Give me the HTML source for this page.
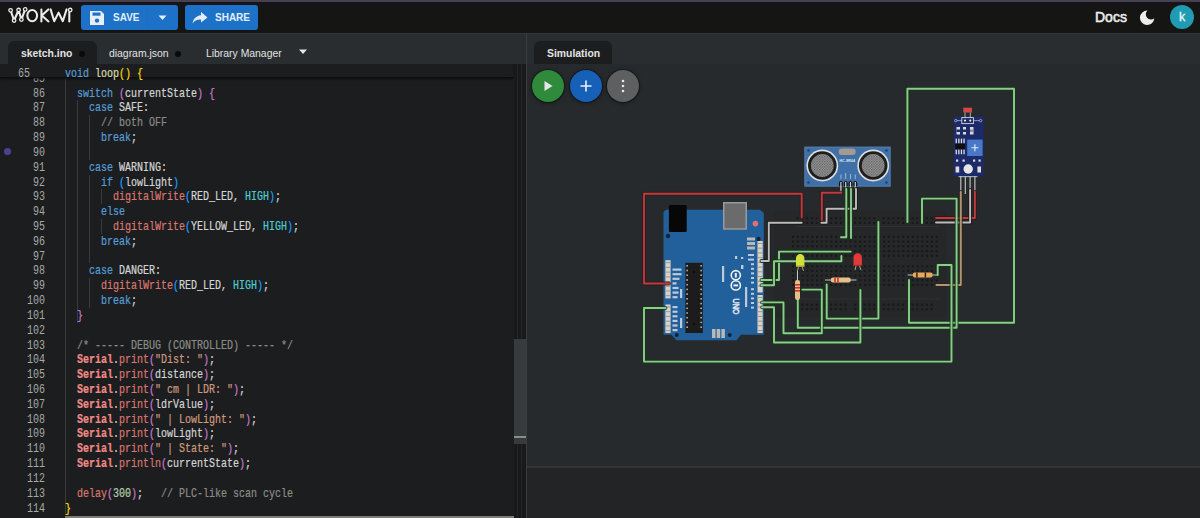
<!DOCTYPE html>
<html><head><meta charset="utf-8">
<style>
*{margin:0;padding:0;box-sizing:border-box}
html,body{width:1200px;height:518px;overflow:hidden;background:#161616;font-family:"Liberation Sans",sans-serif;position:relative}
.abs{position:absolute}
.btn{position:absolute;top:5px;height:25px;background:#1d72c8;border-radius:3px;color:#e3eefa;font-weight:bold;font-size:11px}
.tabtxt{position:absolute;font-size:10.4px;color:#e2e2e2;white-space:nowrap;line-height:12px}
.ln{position:absolute;left:0;width:45px;text-align:right;font-family:"Liberation Mono",monospace;font-size:11px;line-height:14.82px;color:#a9a9a4;transform:scale(0.909,1.08);transform-origin:right top}
.cl{position:absolute;left:65px;white-space:pre;font-family:"Liberation Mono",monospace;font-size:11px;color:#d4d4d4;transform:scale(0.909,1.08);transform-origin:left top;line-height:14.82px;height:14.82px;-webkit-text-stroke:0.2px currentColor}
.k{color:#569cd6}.f{color:#dcdcaa}.fn{color:#da766f}.s{color:#cf9a7e}.c{color:#8b8b85}.p1{color:#ffd700}.p2{color:#c878d0}.p3{color:#179fff}.h{color:#4ec9d0}.n{color:#b5cea8}.ser{color:#f08a86;font-weight:bold}
.fab{position:absolute;top:70px;width:32px;height:32px;border-radius:50%;box-shadow:0 0 0 1px rgba(0,0,0,.3),0 1px 4px rgba(0,0,0,.5)}
</style></head><body>
<div class="abs" style="left:0;top:0;width:1200px;height:2px;background:#46404f"></div>
<div class="abs" style="left:0;top:2px;width:1200px;height:31px;background:#151614"></div><div class="abs" style="left:0;top:2px;width:1200px;height:3px;background:#16131a"></div>
<!-- logo -->
<svg class="abs" style="left:0;top:0" width="80" height="33" viewBox="0 0 80 33">
 <g fill="none" stroke="#ececec" stroke-width="2.05" stroke-linecap="round" stroke-linejoin="round">
  <polyline points="10.6,10.3 14.1,20.5 18.6,10.0 21.4,19.6 25.2,9.4"/>
  <ellipse cx="32.2" cy="15.6" rx="4.9" ry="5.6"/>
  <path d="M41.4,9.4 V21.4 M48.3,9.4 L41.8,15.6 L48.5,21.4"/>
  <polyline points="50.6,9.4 54.2,21.2 58.6,12.6 62.8,21.2 66.6,9.4"/>
  <path d="M69.3,12.8 V21.4"/>
 </g>
 <g fill="#161616" stroke="#ececec" stroke-width="1.3">
  <circle cx="10.6" cy="10.3" r="1.75"/><circle cx="18.6" cy="10.0" r="1.75"/><circle cx="25.2" cy="9.4" r="1.75"/>
  <circle cx="14.1" cy="20.5" r="1.75"/><circle cx="21.4" cy="19.6" r="1.75"/><circle cx="70.2" cy="10.0" r="1.75"/>
 </g>
</svg>
<!-- save button -->
<div class="btn" style="left:81px;width:97px"></div>
<svg class="abs" style="left:88px;top:10px" width="18" height="16" viewBox="0 0 18 16">
 <path d="M2,1 H13 L16,4 V15 H2 Z" fill="#e8eef5"/>
 <rect x="4.5" y="2.5" width="8" height="3.2" fill="#1d72c8"/>
 <circle cx="9" cy="10.6" r="2.2" fill="#1d72c8"/>
</svg>
<div class="abs" style="left:113px;top:11.5px;font-size:10px;font-weight:bold;color:#e3eefa;line-height:12px;transform:scaleY(1.08)">SAVE</div>
<div class="abs" style="left:147px;top:7px;width:1px;height:21px;background:#1c6ec2"></div>
<svg class="abs" style="left:158px;top:15px" width="9" height="6" viewBox="0 0 9 6"><path d="M0.5,0.5 H8.5 L4.5,5 Z" fill="#e3eefa"/></svg>
<!-- share -->
<div class="btn" style="left:185px;width:73px"></div>
<svg class="abs" style="left:191px;top:10px" width="18" height="16" viewBox="0 0 18 16">
 <path d="M10,2 L16.5,7.6 L10,12.6 V9.6 C6,9.4 3.5,10.6 1.5,13.4 C2.3,9 4.8,5.8 10,5.2 Z" fill="#e3eefa"/>
</svg>
<div class="abs" style="left:215px;top:11.5px;font-size:10px;font-weight:bold;color:#e3eefa;line-height:12px;transform:scaleY(1.08)">SHARE</div>
<!-- right header -->
<div class="abs" style="left:1095px;top:9px;font-size:14px;color:#ececec;line-height:16px;-webkit-text-stroke:0.55px #ececec">Docs</div>
<svg class="abs" style="left:1138px;top:9px" width="18" height="18" viewBox="0 0 18 18">
 <path d="M9.5,1.6 A7.2,7.2 0 1 0 16.3,9.2 A4.6,4.6 0 0 1 9.5,1.6 Z" fill="#ededed"/>
</svg>
<div class="abs" style="left:1170px;top:4.5px;width:24px;height:24px;border-radius:50%;background:#1f9cb3"></div>
<div class="abs" style="left:1170px;top:10px;width:24px;text-align:center;font-size:12.5px;color:#eaf6f8;line-height:14px;-webkit-text-stroke:0.3px #eaf6f8">k</div>

<!-- tab bar -->
<div class="abs" style="left:0;top:33px;width:526px;height:31px;background:#2a2d30;border-top:1px solid #32353a"></div>
<div class="abs" style="left:8px;top:41px;width:89px;height:23px;border-radius:6px 6px 0 0;background:#1c1d1f"></div>
<div class="tabtxt" style="left:21px;top:47.7px;font-weight:bold">sketch.ino</div>
<div class="abs" style="left:78.5px;top:50.5px;width:6px;height:6px;border-radius:50%;background:#0a0a0a"></div>
<div class="tabtxt" style="left:109px;top:47.7px">diagram.json</div>
<div class="abs" style="left:175px;top:50.5px;width:6px;height:6px;border-radius:50%;background:#0a0a0a"></div>
<div class="tabtxt" style="left:206px;top:47.7px">Library Manager</div>
<svg class="abs" style="left:299px;top:49px" width="8" height="5" viewBox="0 0 8 5"><path d="M0,0.5 H8 L4,5 Z" fill="#e6e6e6"/></svg>

<!-- code -->
<div class="abs" style="left:0;top:64px;width:526px;height:454px;background:#1c1d1f;overflow:hidden">
<div class="abs" style="left:65px;top:6.76px;width:1px;height:444.60px;background:#3a3a3a"></div><div class="abs" style="left:77px;top:36.40px;width:1px;height:222.30px;background:#3a3a3a"></div><div class="abs" style="left:89px;top:51.22px;width:1px;height:44.46px;background:#3a3a3a"></div><div class="abs" style="left:89px;top:110.50px;width:1px;height:88.92px;background:#3a3a3a"></div><div class="abs" style="left:89px;top:214.24px;width:1px;height:29.64px;background:#3a3a3a"></div><div class="abs" style="left:101px;top:125.32px;width:1px;height:14.82px;background:#3a3a3a"></div><div class="abs" style="left:101px;top:154.96px;width:1px;height:14.82px;background:#3a3a3a"></div><div class="ln" style="top:6.76px">85</div><div class="cl" style="top:6.76px"></div><div class="ln" style="top:21.58px">86</div><div class="cl" style="top:21.58px">  <span class="k">switch</span> <span class="p2">(</span>currentState<span class="p2">)</span> <span class="p2">{</span></div><div class="ln" style="top:36.40px">87</div><div class="cl" style="top:36.40px">    <span class="k">case</span> SAFE:</div><div class="ln" style="top:51.22px">88</div><div class="cl" style="top:51.22px">      <span class="c">// both OFF</span></div><div class="ln" style="top:66.04px">89</div><div class="cl" style="top:66.04px">      <span class="k">break</span>;</div><div class="ln" style="top:80.86px">90</div><div class="cl" style="top:80.86px"></div><div class="ln" style="top:95.68px">91</div><div class="cl" style="top:95.68px">    <span class="k">case</span> WARNING:</div><div class="ln" style="top:110.50px">92</div><div class="cl" style="top:110.50px">      <span class="k">if</span> <span class="p3">(</span>lowLight<span class="p3">)</span></div><div class="ln" style="top:125.32px">93</div><div class="cl" style="top:125.32px">        <span class="fn">digitalWrite</span><span class="p3">(</span>RED_LED, <span class="h">HIGH</span><span class="p3">)</span>;</div><div class="ln" style="top:140.14px">94</div><div class="cl" style="top:140.14px">      <span class="k">else</span></div><div class="ln" style="top:154.96px">95</div><div class="cl" style="top:154.96px">        <span class="fn">digitalWrite</span><span class="p3">(</span>YELLOW_LED, <span class="h">HIGH</span><span class="p3">)</span>;</div><div class="ln" style="top:169.78px">96</div><div class="cl" style="top:169.78px">      <span class="k">break</span>;</div><div class="ln" style="top:184.60px">97</div><div class="cl" style="top:184.60px"></div><div class="ln" style="top:199.42px">98</div><div class="cl" style="top:199.42px">    <span class="k">case</span> DANGER:</div><div class="ln" style="top:214.24px">99</div><div class="cl" style="top:214.24px">      <span class="fn">digitalWrite</span><span class="p3">(</span>RED_LED, <span class="h">HIGH</span><span class="p3">)</span>;</div><div class="ln" style="top:229.06px">100</div><div class="cl" style="top:229.06px">      <span class="k">break</span>;</div><div class="ln" style="top:243.88px">101</div><div class="cl" style="top:243.88px">  <span class="p2">}</span></div><div class="ln" style="top:258.70px">102</div><div class="cl" style="top:258.70px"></div><div class="ln" style="top:273.52px">103</div><div class="cl" style="top:273.52px">  <span class="c">/* ----- DEBUG (CONTROLLED) ----- */</span></div><div class="ln" style="top:288.34px">104</div><div class="cl" style="top:288.34px">  <span class="ser">Serial</span>.<span class="fn">print</span><span class="p2">(</span><span class="s">&quot;Dist: &quot;</span><span class="p2">)</span>;</div><div class="ln" style="top:303.16px">105</div><div class="cl" style="top:303.16px">  <span class="ser">Serial</span>.<span class="fn">print</span><span class="p2">(</span>distance<span class="p2">)</span>;</div><div class="ln" style="top:317.98px">106</div><div class="cl" style="top:317.98px">  <span class="ser">Serial</span>.<span class="fn">print</span><span class="p2">(</span><span class="s">&quot; cm | LDR: &quot;</span><span class="p2">)</span>;</div><div class="ln" style="top:332.80px">107</div><div class="cl" style="top:332.80px">  <span class="ser">Serial</span>.<span class="fn">print</span><span class="p2">(</span>ldrValue<span class="p2">)</span>;</div><div class="ln" style="top:347.62px">108</div><div class="cl" style="top:347.62px">  <span class="ser">Serial</span>.<span class="fn">print</span><span class="p2">(</span><span class="s">&quot; | LowLight: &quot;</span><span class="p2">)</span>;</div><div class="ln" style="top:362.44px">109</div><div class="cl" style="top:362.44px">  <span class="ser">Serial</span>.<span class="fn">print</span><span class="p2">(</span>lowLight<span class="p2">)</span>;</div><div class="ln" style="top:377.26px">110</div><div class="cl" style="top:377.26px">  <span class="ser">Serial</span>.<span class="fn">print</span><span class="p2">(</span><span class="s">&quot; | State: &quot;</span><span class="p2">)</span>;</div><div class="ln" style="top:392.08px">111</div><div class="cl" style="top:392.08px">  <span class="ser">Serial</span>.<span class="fn">println</span><span class="p2">(</span>currentState<span class="p2">)</span>;</div><div class="ln" style="top:406.90px">112</div><div class="cl" style="top:406.90px"></div><div class="ln" style="top:421.72px">113</div><div class="cl" style="top:421.72px">  <span class="fn">delay</span><span class="p2">(</span><span class="n">300</span><span class="p2">)</span>;   <span class="c">// PLC-like scan cycle</span></div><div class="ln" style="top:436.54px">114</div><div class="cl" style="top:436.54px"><span class="p1">}</span></div><div class="abs" style="left:0;top:0;width:513px;height:14px;background:#1c1d1f;border-bottom:1px solid #0e0e0f;box-shadow:0 1px 2px rgba(0,0,0,.6)"></div><div class="ln" style="top:1.98px;width:30px">65</div><div class="cl" style="top:1.98px"><span class="k">void</span> <span class="f">loop</span><span class="p1">()</span> <span class="p1">{</span></div>
 <div class="abs" style="left:4.3px;top:83.5px;width:7px;height:7px;border-radius:50%;background:#4b418e;box-shadow:0 0 2px #2a2450"></div>
 <div class="abs" style="left:65px;top:451.5px;width:461px;height:2px;background:#7d7d76"></div>
 <!-- scrollbar -->
 <div class="abs" style="left:514px;top:0;width:12px;height:454px;background:#19191b"></div>
 <div class="abs" style="left:517px;top:0;width:1px;height:454px;background:#242527"></div>
 <div class="abs" style="left:521px;top:0;width:1px;height:454px;background:#242527"></div>
 <div class="abs" style="left:514px;top:275px;width:12px;height:105px;background:#383b3e"></div>
 <div class="abs" style="left:514px;top:372px;width:12px;height:2px;background:#8a8c8c"></div>
</div>
<div class="abs" style="left:526px;top:33px;width:1px;height:485px;background:#3a3c3e"></div>

<!-- simulation -->
<div class="abs" style="left:527px;top:33px;width:673px;height:31px;background:#2a2d30;border-top:1px solid #32353a"></div>
<div class="abs" style="left:534px;top:41px;width:78px;height:23px;border-radius:6px 6px 0 0;background:#1c1d1f"></div>
<div class="tabtxt" style="left:547px;top:47.7px;font-weight:bold">Simulation</div>
<div class="abs" style="left:527px;top:64px;width:673px;height:403px;background:#272a2c"></div>
<div class="abs" style="left:527px;top:466px;width:673px;height:2px;background:#313436"></div>
<div class="abs" style="left:527px;top:468px;width:673px;height:50px;background:#222425"></div>
<svg class="abs" style="left:0;top:0;pointer-events:none" width="1200" height="518" viewBox="0 0 1200 518"><defs><pattern id="mesh" width="2.6" height="2.6" patternUnits="userSpaceOnUse"><rect width="2.6" height="2.6" fill="#9c9c9c"/><rect x="0" y="0" width="1.3" height="1.3" fill="#5c5c5c"/><rect x="1.3" y="1.3" width="1.3" height="1.3" fill="#6a6a6a"/></pattern></defs><rect x="774" y="211" width="173" height="107" rx="2" fill="#252729"/><g fill="#18191a"><rect x="796.5" y="217.2" width="2.1" height="2.1"/><rect x="801.3" y="217.2" width="2.1" height="2.1"/><rect x="806.1" y="217.2" width="2.1" height="2.1"/><rect x="810.9" y="217.2" width="2.1" height="2.1"/><rect x="815.7" y="217.2" width="2.1" height="2.1"/><rect x="825.2" y="217.2" width="2.1" height="2.1"/><rect x="830.0" y="217.2" width="2.1" height="2.1"/><rect x="834.8" y="217.2" width="2.1" height="2.1"/><rect x="839.6" y="217.2" width="2.1" height="2.1"/><rect x="844.4" y="217.2" width="2.1" height="2.1"/><rect x="854.0" y="217.2" width="2.1" height="2.1"/><rect x="858.8" y="217.2" width="2.1" height="2.1"/><rect x="863.6" y="217.2" width="2.1" height="2.1"/><rect x="868.4" y="217.2" width="2.1" height="2.1"/><rect x="873.1" y="217.2" width="2.1" height="2.1"/><rect x="882.7" y="217.2" width="2.1" height="2.1"/><rect x="887.5" y="217.2" width="2.1" height="2.1"/><rect x="892.3" y="217.2" width="2.1" height="2.1"/><rect x="897.1" y="217.2" width="2.1" height="2.1"/><rect x="901.9" y="217.2" width="2.1" height="2.1"/><rect x="911.5" y="217.2" width="2.1" height="2.1"/><rect x="916.2" y="217.2" width="2.1" height="2.1"/><rect x="921.0" y="217.2" width="2.1" height="2.1"/><rect x="925.8" y="217.2" width="2.1" height="2.1"/><rect x="930.6" y="217.2" width="2.1" height="2.1"/><rect x="796.5" y="221.8" width="2.1" height="2.1"/><rect x="801.3" y="221.8" width="2.1" height="2.1"/><rect x="806.1" y="221.8" width="2.1" height="2.1"/><rect x="810.9" y="221.8" width="2.1" height="2.1"/><rect x="815.7" y="221.8" width="2.1" height="2.1"/><rect x="825.2" y="221.8" width="2.1" height="2.1"/><rect x="830.0" y="221.8" width="2.1" height="2.1"/><rect x="834.8" y="221.8" width="2.1" height="2.1"/><rect x="839.6" y="221.8" width="2.1" height="2.1"/><rect x="844.4" y="221.8" width="2.1" height="2.1"/><rect x="854.0" y="221.8" width="2.1" height="2.1"/><rect x="858.8" y="221.8" width="2.1" height="2.1"/><rect x="863.6" y="221.8" width="2.1" height="2.1"/><rect x="868.4" y="221.8" width="2.1" height="2.1"/><rect x="873.1" y="221.8" width="2.1" height="2.1"/><rect x="882.7" y="221.8" width="2.1" height="2.1"/><rect x="887.5" y="221.8" width="2.1" height="2.1"/><rect x="892.3" y="221.8" width="2.1" height="2.1"/><rect x="897.1" y="221.8" width="2.1" height="2.1"/><rect x="901.9" y="221.8" width="2.1" height="2.1"/><rect x="911.5" y="221.8" width="2.1" height="2.1"/><rect x="916.2" y="221.8" width="2.1" height="2.1"/><rect x="921.0" y="221.8" width="2.1" height="2.1"/><rect x="925.8" y="221.8" width="2.1" height="2.1"/><rect x="930.6" y="221.8" width="2.1" height="2.1"/><rect x="792.0" y="235.8" width="2.1" height="2.1"/><rect x="792.0" y="265.2" width="2.1" height="2.1"/><rect x="796.8" y="235.8" width="2.1" height="2.1"/><rect x="796.8" y="265.2" width="2.1" height="2.1"/><rect x="801.6" y="235.8" width="2.1" height="2.1"/><rect x="801.6" y="265.2" width="2.1" height="2.1"/><rect x="806.4" y="235.8" width="2.1" height="2.1"/><rect x="806.4" y="265.2" width="2.1" height="2.1"/><rect x="811.2" y="235.8" width="2.1" height="2.1"/><rect x="811.2" y="265.2" width="2.1" height="2.1"/><rect x="816.0" y="235.8" width="2.1" height="2.1"/><rect x="816.0" y="265.2" width="2.1" height="2.1"/><rect x="820.7" y="235.8" width="2.1" height="2.1"/><rect x="820.7" y="265.2" width="2.1" height="2.1"/><rect x="825.5" y="235.8" width="2.1" height="2.1"/><rect x="825.5" y="265.2" width="2.1" height="2.1"/><rect x="830.3" y="235.8" width="2.1" height="2.1"/><rect x="830.3" y="265.2" width="2.1" height="2.1"/><rect x="835.1" y="235.8" width="2.1" height="2.1"/><rect x="835.1" y="265.2" width="2.1" height="2.1"/><rect x="839.9" y="235.8" width="2.1" height="2.1"/><rect x="839.9" y="265.2" width="2.1" height="2.1"/><rect x="844.7" y="235.8" width="2.1" height="2.1"/><rect x="844.7" y="265.2" width="2.1" height="2.1"/><rect x="849.5" y="235.8" width="2.1" height="2.1"/><rect x="849.5" y="265.2" width="2.1" height="2.1"/><rect x="854.3" y="235.8" width="2.1" height="2.1"/><rect x="854.3" y="265.2" width="2.1" height="2.1"/><rect x="859.1" y="235.8" width="2.1" height="2.1"/><rect x="859.1" y="265.2" width="2.1" height="2.1"/><rect x="863.9" y="235.8" width="2.1" height="2.1"/><rect x="863.9" y="265.2" width="2.1" height="2.1"/><rect x="868.6" y="235.8" width="2.1" height="2.1"/><rect x="868.6" y="265.2" width="2.1" height="2.1"/><rect x="873.4" y="235.8" width="2.1" height="2.1"/><rect x="873.4" y="265.2" width="2.1" height="2.1"/><rect x="878.2" y="235.8" width="2.1" height="2.1"/><rect x="878.2" y="265.2" width="2.1" height="2.1"/><rect x="883.0" y="235.8" width="2.1" height="2.1"/><rect x="883.0" y="265.2" width="2.1" height="2.1"/><rect x="887.8" y="235.8" width="2.1" height="2.1"/><rect x="887.8" y="265.2" width="2.1" height="2.1"/><rect x="892.6" y="235.8" width="2.1" height="2.1"/><rect x="892.6" y="265.2" width="2.1" height="2.1"/><rect x="897.4" y="235.8" width="2.1" height="2.1"/><rect x="897.4" y="265.2" width="2.1" height="2.1"/><rect x="902.2" y="235.8" width="2.1" height="2.1"/><rect x="902.2" y="265.2" width="2.1" height="2.1"/><rect x="907.0" y="235.8" width="2.1" height="2.1"/><rect x="907.0" y="265.2" width="2.1" height="2.1"/><rect x="911.8" y="235.8" width="2.1" height="2.1"/><rect x="911.8" y="265.2" width="2.1" height="2.1"/><rect x="916.5" y="235.8" width="2.1" height="2.1"/><rect x="916.5" y="265.2" width="2.1" height="2.1"/><rect x="921.3" y="235.8" width="2.1" height="2.1"/><rect x="921.3" y="265.2" width="2.1" height="2.1"/><rect x="926.1" y="235.8" width="2.1" height="2.1"/><rect x="926.1" y="265.2" width="2.1" height="2.1"/><rect x="930.9" y="235.8" width="2.1" height="2.1"/><rect x="930.9" y="265.2" width="2.1" height="2.1"/><rect x="935.7" y="235.8" width="2.1" height="2.1"/><rect x="935.7" y="265.2" width="2.1" height="2.1"/><rect x="792.0" y="240.5" width="2.1" height="2.1"/><rect x="792.0" y="269.9" width="2.1" height="2.1"/><rect x="796.8" y="240.5" width="2.1" height="2.1"/><rect x="796.8" y="269.9" width="2.1" height="2.1"/><rect x="801.6" y="240.5" width="2.1" height="2.1"/><rect x="801.6" y="269.9" width="2.1" height="2.1"/><rect x="806.4" y="240.5" width="2.1" height="2.1"/><rect x="806.4" y="269.9" width="2.1" height="2.1"/><rect x="811.2" y="240.5" width="2.1" height="2.1"/><rect x="811.2" y="269.9" width="2.1" height="2.1"/><rect x="816.0" y="240.5" width="2.1" height="2.1"/><rect x="816.0" y="269.9" width="2.1" height="2.1"/><rect x="820.7" y="240.5" width="2.1" height="2.1"/><rect x="820.7" y="269.9" width="2.1" height="2.1"/><rect x="825.5" y="240.5" width="2.1" height="2.1"/><rect x="825.5" y="269.9" width="2.1" height="2.1"/><rect x="830.3" y="240.5" width="2.1" height="2.1"/><rect x="830.3" y="269.9" width="2.1" height="2.1"/><rect x="835.1" y="240.5" width="2.1" height="2.1"/><rect x="835.1" y="269.9" width="2.1" height="2.1"/><rect x="839.9" y="240.5" width="2.1" height="2.1"/><rect x="839.9" y="269.9" width="2.1" height="2.1"/><rect x="844.7" y="240.5" width="2.1" height="2.1"/><rect x="844.7" y="269.9" width="2.1" height="2.1"/><rect x="849.5" y="240.5" width="2.1" height="2.1"/><rect x="849.5" y="269.9" width="2.1" height="2.1"/><rect x="854.3" y="240.5" width="2.1" height="2.1"/><rect x="854.3" y="269.9" width="2.1" height="2.1"/><rect x="859.1" y="240.5" width="2.1" height="2.1"/><rect x="859.1" y="269.9" width="2.1" height="2.1"/><rect x="863.9" y="240.5" width="2.1" height="2.1"/><rect x="863.9" y="269.9" width="2.1" height="2.1"/><rect x="868.6" y="240.5" width="2.1" height="2.1"/><rect x="868.6" y="269.9" width="2.1" height="2.1"/><rect x="873.4" y="240.5" width="2.1" height="2.1"/><rect x="873.4" y="269.9" width="2.1" height="2.1"/><rect x="878.2" y="240.5" width="2.1" height="2.1"/><rect x="878.2" y="269.9" width="2.1" height="2.1"/><rect x="883.0" y="240.5" width="2.1" height="2.1"/><rect x="883.0" y="269.9" width="2.1" height="2.1"/><rect x="887.8" y="240.5" width="2.1" height="2.1"/><rect x="887.8" y="269.9" width="2.1" height="2.1"/><rect x="892.6" y="240.5" width="2.1" height="2.1"/><rect x="892.6" y="269.9" width="2.1" height="2.1"/><rect x="897.4" y="240.5" width="2.1" height="2.1"/><rect x="897.4" y="269.9" width="2.1" height="2.1"/><rect x="902.2" y="240.5" width="2.1" height="2.1"/><rect x="902.2" y="269.9" width="2.1" height="2.1"/><rect x="907.0" y="240.5" width="2.1" height="2.1"/><rect x="907.0" y="269.9" width="2.1" height="2.1"/><rect x="911.8" y="240.5" width="2.1" height="2.1"/><rect x="911.8" y="269.9" width="2.1" height="2.1"/><rect x="916.5" y="240.5" width="2.1" height="2.1"/><rect x="916.5" y="269.9" width="2.1" height="2.1"/><rect x="921.3" y="240.5" width="2.1" height="2.1"/><rect x="921.3" y="269.9" width="2.1" height="2.1"/><rect x="926.1" y="240.5" width="2.1" height="2.1"/><rect x="926.1" y="269.9" width="2.1" height="2.1"/><rect x="930.9" y="240.5" width="2.1" height="2.1"/><rect x="930.9" y="269.9" width="2.1" height="2.1"/><rect x="935.7" y="240.5" width="2.1" height="2.1"/><rect x="935.7" y="269.9" width="2.1" height="2.1"/><rect x="792.0" y="245.2" width="2.1" height="2.1"/><rect x="792.0" y="274.6" width="2.1" height="2.1"/><rect x="796.8" y="245.2" width="2.1" height="2.1"/><rect x="796.8" y="274.6" width="2.1" height="2.1"/><rect x="801.6" y="245.2" width="2.1" height="2.1"/><rect x="801.6" y="274.6" width="2.1" height="2.1"/><rect x="806.4" y="245.2" width="2.1" height="2.1"/><rect x="806.4" y="274.6" width="2.1" height="2.1"/><rect x="811.2" y="245.2" width="2.1" height="2.1"/><rect x="811.2" y="274.6" width="2.1" height="2.1"/><rect x="816.0" y="245.2" width="2.1" height="2.1"/><rect x="816.0" y="274.6" width="2.1" height="2.1"/><rect x="820.7" y="245.2" width="2.1" height="2.1"/><rect x="820.7" y="274.6" width="2.1" height="2.1"/><rect x="825.5" y="245.2" width="2.1" height="2.1"/><rect x="825.5" y="274.6" width="2.1" height="2.1"/><rect x="830.3" y="245.2" width="2.1" height="2.1"/><rect x="830.3" y="274.6" width="2.1" height="2.1"/><rect x="835.1" y="245.2" width="2.1" height="2.1"/><rect x="835.1" y="274.6" width="2.1" height="2.1"/><rect x="839.9" y="245.2" width="2.1" height="2.1"/><rect x="839.9" y="274.6" width="2.1" height="2.1"/><rect x="844.7" y="245.2" width="2.1" height="2.1"/><rect x="844.7" y="274.6" width="2.1" height="2.1"/><rect x="849.5" y="245.2" width="2.1" height="2.1"/><rect x="849.5" y="274.6" width="2.1" height="2.1"/><rect x="854.3" y="245.2" width="2.1" height="2.1"/><rect x="854.3" y="274.6" width="2.1" height="2.1"/><rect x="859.1" y="245.2" width="2.1" height="2.1"/><rect x="859.1" y="274.6" width="2.1" height="2.1"/><rect x="863.9" y="245.2" width="2.1" height="2.1"/><rect x="863.9" y="274.6" width="2.1" height="2.1"/><rect x="868.6" y="245.2" width="2.1" height="2.1"/><rect x="868.6" y="274.6" width="2.1" height="2.1"/><rect x="873.4" y="245.2" width="2.1" height="2.1"/><rect x="873.4" y="274.6" width="2.1" height="2.1"/><rect x="878.2" y="245.2" width="2.1" height="2.1"/><rect x="878.2" y="274.6" width="2.1" height="2.1"/><rect x="883.0" y="245.2" width="2.1" height="2.1"/><rect x="883.0" y="274.6" width="2.1" height="2.1"/><rect x="887.8" y="245.2" width="2.1" height="2.1"/><rect x="887.8" y="274.6" width="2.1" height="2.1"/><rect x="892.6" y="245.2" width="2.1" height="2.1"/><rect x="892.6" y="274.6" width="2.1" height="2.1"/><rect x="897.4" y="245.2" width="2.1" height="2.1"/><rect x="897.4" y="274.6" width="2.1" height="2.1"/><rect x="902.2" y="245.2" width="2.1" height="2.1"/><rect x="902.2" y="274.6" width="2.1" height="2.1"/><rect x="907.0" y="245.2" width="2.1" height="2.1"/><rect x="907.0" y="274.6" width="2.1" height="2.1"/><rect x="911.8" y="245.2" width="2.1" height="2.1"/><rect x="911.8" y="274.6" width="2.1" height="2.1"/><rect x="916.5" y="245.2" width="2.1" height="2.1"/><rect x="916.5" y="274.6" width="2.1" height="2.1"/><rect x="921.3" y="245.2" width="2.1" height="2.1"/><rect x="921.3" y="274.6" width="2.1" height="2.1"/><rect x="926.1" y="245.2" width="2.1" height="2.1"/><rect x="926.1" y="274.6" width="2.1" height="2.1"/><rect x="930.9" y="245.2" width="2.1" height="2.1"/><rect x="930.9" y="274.6" width="2.1" height="2.1"/><rect x="935.7" y="245.2" width="2.1" height="2.1"/><rect x="935.7" y="274.6" width="2.1" height="2.1"/><rect x="792.0" y="250.0" width="2.1" height="2.1"/><rect x="792.0" y="279.2" width="2.1" height="2.1"/><rect x="796.8" y="250.0" width="2.1" height="2.1"/><rect x="796.8" y="279.2" width="2.1" height="2.1"/><rect x="801.6" y="250.0" width="2.1" height="2.1"/><rect x="801.6" y="279.2" width="2.1" height="2.1"/><rect x="806.4" y="250.0" width="2.1" height="2.1"/><rect x="806.4" y="279.2" width="2.1" height="2.1"/><rect x="811.2" y="250.0" width="2.1" height="2.1"/><rect x="811.2" y="279.2" width="2.1" height="2.1"/><rect x="816.0" y="250.0" width="2.1" height="2.1"/><rect x="816.0" y="279.2" width="2.1" height="2.1"/><rect x="820.7" y="250.0" width="2.1" height="2.1"/><rect x="820.7" y="279.2" width="2.1" height="2.1"/><rect x="825.5" y="250.0" width="2.1" height="2.1"/><rect x="825.5" y="279.2" width="2.1" height="2.1"/><rect x="830.3" y="250.0" width="2.1" height="2.1"/><rect x="830.3" y="279.2" width="2.1" height="2.1"/><rect x="835.1" y="250.0" width="2.1" height="2.1"/><rect x="835.1" y="279.2" width="2.1" height="2.1"/><rect x="839.9" y="250.0" width="2.1" height="2.1"/><rect x="839.9" y="279.2" width="2.1" height="2.1"/><rect x="844.7" y="250.0" width="2.1" height="2.1"/><rect x="844.7" y="279.2" width="2.1" height="2.1"/><rect x="849.5" y="250.0" width="2.1" height="2.1"/><rect x="849.5" y="279.2" width="2.1" height="2.1"/><rect x="854.3" y="250.0" width="2.1" height="2.1"/><rect x="854.3" y="279.2" width="2.1" height="2.1"/><rect x="859.1" y="250.0" width="2.1" height="2.1"/><rect x="859.1" y="279.2" width="2.1" height="2.1"/><rect x="863.9" y="250.0" width="2.1" height="2.1"/><rect x="863.9" y="279.2" width="2.1" height="2.1"/><rect x="868.6" y="250.0" width="2.1" height="2.1"/><rect x="868.6" y="279.2" width="2.1" height="2.1"/><rect x="873.4" y="250.0" width="2.1" height="2.1"/><rect x="873.4" y="279.2" width="2.1" height="2.1"/><rect x="878.2" y="250.0" width="2.1" height="2.1"/><rect x="878.2" y="279.2" width="2.1" height="2.1"/><rect x="883.0" y="250.0" width="2.1" height="2.1"/><rect x="883.0" y="279.2" width="2.1" height="2.1"/><rect x="887.8" y="250.0" width="2.1" height="2.1"/><rect x="887.8" y="279.2" width="2.1" height="2.1"/><rect x="892.6" y="250.0" width="2.1" height="2.1"/><rect x="892.6" y="279.2" width="2.1" height="2.1"/><rect x="897.4" y="250.0" width="2.1" height="2.1"/><rect x="897.4" y="279.2" width="2.1" height="2.1"/><rect x="902.2" y="250.0" width="2.1" height="2.1"/><rect x="902.2" y="279.2" width="2.1" height="2.1"/><rect x="907.0" y="250.0" width="2.1" height="2.1"/><rect x="907.0" y="279.2" width="2.1" height="2.1"/><rect x="911.8" y="250.0" width="2.1" height="2.1"/><rect x="911.8" y="279.2" width="2.1" height="2.1"/><rect x="916.5" y="250.0" width="2.1" height="2.1"/><rect x="916.5" y="279.2" width="2.1" height="2.1"/><rect x="921.3" y="250.0" width="2.1" height="2.1"/><rect x="921.3" y="279.2" width="2.1" height="2.1"/><rect x="926.1" y="250.0" width="2.1" height="2.1"/><rect x="926.1" y="279.2" width="2.1" height="2.1"/><rect x="930.9" y="250.0" width="2.1" height="2.1"/><rect x="930.9" y="279.2" width="2.1" height="2.1"/><rect x="935.7" y="250.0" width="2.1" height="2.1"/><rect x="935.7" y="279.2" width="2.1" height="2.1"/><rect x="792.0" y="254.7" width="2.1" height="2.1"/><rect x="792.0" y="283.9" width="2.1" height="2.1"/><rect x="796.8" y="254.7" width="2.1" height="2.1"/><rect x="796.8" y="283.9" width="2.1" height="2.1"/><rect x="801.6" y="254.7" width="2.1" height="2.1"/><rect x="801.6" y="283.9" width="2.1" height="2.1"/><rect x="806.4" y="254.7" width="2.1" height="2.1"/><rect x="806.4" y="283.9" width="2.1" height="2.1"/><rect x="811.2" y="254.7" width="2.1" height="2.1"/><rect x="811.2" y="283.9" width="2.1" height="2.1"/><rect x="816.0" y="254.7" width="2.1" height="2.1"/><rect x="816.0" y="283.9" width="2.1" height="2.1"/><rect x="820.7" y="254.7" width="2.1" height="2.1"/><rect x="820.7" y="283.9" width="2.1" height="2.1"/><rect x="825.5" y="254.7" width="2.1" height="2.1"/><rect x="825.5" y="283.9" width="2.1" height="2.1"/><rect x="830.3" y="254.7" width="2.1" height="2.1"/><rect x="830.3" y="283.9" width="2.1" height="2.1"/><rect x="835.1" y="254.7" width="2.1" height="2.1"/><rect x="835.1" y="283.9" width="2.1" height="2.1"/><rect x="839.9" y="254.7" width="2.1" height="2.1"/><rect x="839.9" y="283.9" width="2.1" height="2.1"/><rect x="844.7" y="254.7" width="2.1" height="2.1"/><rect x="844.7" y="283.9" width="2.1" height="2.1"/><rect x="849.5" y="254.7" width="2.1" height="2.1"/><rect x="849.5" y="283.9" width="2.1" height="2.1"/><rect x="854.3" y="254.7" width="2.1" height="2.1"/><rect x="854.3" y="283.9" width="2.1" height="2.1"/><rect x="859.1" y="254.7" width="2.1" height="2.1"/><rect x="859.1" y="283.9" width="2.1" height="2.1"/><rect x="863.9" y="254.7" width="2.1" height="2.1"/><rect x="863.9" y="283.9" width="2.1" height="2.1"/><rect x="868.6" y="254.7" width="2.1" height="2.1"/><rect x="868.6" y="283.9" width="2.1" height="2.1"/><rect x="873.4" y="254.7" width="2.1" height="2.1"/><rect x="873.4" y="283.9" width="2.1" height="2.1"/><rect x="878.2" y="254.7" width="2.1" height="2.1"/><rect x="878.2" y="283.9" width="2.1" height="2.1"/><rect x="883.0" y="254.7" width="2.1" height="2.1"/><rect x="883.0" y="283.9" width="2.1" height="2.1"/><rect x="887.8" y="254.7" width="2.1" height="2.1"/><rect x="887.8" y="283.9" width="2.1" height="2.1"/><rect x="892.6" y="254.7" width="2.1" height="2.1"/><rect x="892.6" y="283.9" width="2.1" height="2.1"/><rect x="897.4" y="254.7" width="2.1" height="2.1"/><rect x="897.4" y="283.9" width="2.1" height="2.1"/><rect x="902.2" y="254.7" width="2.1" height="2.1"/><rect x="902.2" y="283.9" width="2.1" height="2.1"/><rect x="907.0" y="254.7" width="2.1" height="2.1"/><rect x="907.0" y="283.9" width="2.1" height="2.1"/><rect x="911.8" y="254.7" width="2.1" height="2.1"/><rect x="911.8" y="283.9" width="2.1" height="2.1"/><rect x="916.5" y="254.7" width="2.1" height="2.1"/><rect x="916.5" y="283.9" width="2.1" height="2.1"/><rect x="921.3" y="254.7" width="2.1" height="2.1"/><rect x="921.3" y="283.9" width="2.1" height="2.1"/><rect x="926.1" y="254.7" width="2.1" height="2.1"/><rect x="926.1" y="283.9" width="2.1" height="2.1"/><rect x="930.9" y="254.7" width="2.1" height="2.1"/><rect x="930.9" y="283.9" width="2.1" height="2.1"/><rect x="935.7" y="254.7" width="2.1" height="2.1"/><rect x="935.7" y="283.9" width="2.1" height="2.1"/><rect x="796.5" y="303.6" width="2.1" height="2.1"/><rect x="801.3" y="303.6" width="2.1" height="2.1"/><rect x="806.1" y="303.6" width="2.1" height="2.1"/><rect x="810.9" y="303.6" width="2.1" height="2.1"/><rect x="815.7" y="303.6" width="2.1" height="2.1"/><rect x="825.2" y="303.6" width="2.1" height="2.1"/><rect x="830.0" y="303.6" width="2.1" height="2.1"/><rect x="834.8" y="303.6" width="2.1" height="2.1"/><rect x="839.6" y="303.6" width="2.1" height="2.1"/><rect x="844.4" y="303.6" width="2.1" height="2.1"/><rect x="854.0" y="303.6" width="2.1" height="2.1"/><rect x="858.8" y="303.6" width="2.1" height="2.1"/><rect x="863.6" y="303.6" width="2.1" height="2.1"/><rect x="868.4" y="303.6" width="2.1" height="2.1"/><rect x="873.1" y="303.6" width="2.1" height="2.1"/><rect x="882.7" y="303.6" width="2.1" height="2.1"/><rect x="887.5" y="303.6" width="2.1" height="2.1"/><rect x="892.3" y="303.6" width="2.1" height="2.1"/><rect x="897.1" y="303.6" width="2.1" height="2.1"/><rect x="901.9" y="303.6" width="2.1" height="2.1"/><rect x="911.5" y="303.6" width="2.1" height="2.1"/><rect x="916.2" y="303.6" width="2.1" height="2.1"/><rect x="921.0" y="303.6" width="2.1" height="2.1"/><rect x="925.8" y="303.6" width="2.1" height="2.1"/><rect x="930.6" y="303.6" width="2.1" height="2.1"/><rect x="796.5" y="308.2" width="2.1" height="2.1"/><rect x="801.3" y="308.2" width="2.1" height="2.1"/><rect x="806.1" y="308.2" width="2.1" height="2.1"/><rect x="810.9" y="308.2" width="2.1" height="2.1"/><rect x="815.7" y="308.2" width="2.1" height="2.1"/><rect x="825.2" y="308.2" width="2.1" height="2.1"/><rect x="830.0" y="308.2" width="2.1" height="2.1"/><rect x="834.8" y="308.2" width="2.1" height="2.1"/><rect x="839.6" y="308.2" width="2.1" height="2.1"/><rect x="844.4" y="308.2" width="2.1" height="2.1"/><rect x="854.0" y="308.2" width="2.1" height="2.1"/><rect x="858.8" y="308.2" width="2.1" height="2.1"/><rect x="863.6" y="308.2" width="2.1" height="2.1"/><rect x="868.4" y="308.2" width="2.1" height="2.1"/><rect x="873.1" y="308.2" width="2.1" height="2.1"/><rect x="882.7" y="308.2" width="2.1" height="2.1"/><rect x="887.5" y="308.2" width="2.1" height="2.1"/><rect x="892.3" y="308.2" width="2.1" height="2.1"/><rect x="897.1" y="308.2" width="2.1" height="2.1"/><rect x="901.9" y="308.2" width="2.1" height="2.1"/><rect x="911.5" y="308.2" width="2.1" height="2.1"/><rect x="916.2" y="308.2" width="2.1" height="2.1"/><rect x="921.0" y="308.2" width="2.1" height="2.1"/><rect x="925.8" y="308.2" width="2.1" height="2.1"/><rect x="930.6" y="308.2" width="2.1" height="2.1"/></g><rect x="796" y="226" width="143" height="1" fill="#2c3238"/><rect x="796" y="298.5" width="143" height="1" fill="#2c3238"/><path d="M663.5,212 L666,209.8 H760 L763.8,213 V334.8 H741 L736.5,340.2 H676.5 L671.5,334.8 H663.5 Z" fill="#22609c"/><rect x="668.9" y="205" width="17.8" height="27" rx="1" fill="#070707"/><rect x="723" y="202" width="24" height="27.7" fill="#9a9a9a"/><rect x="724.5" y="203.5" width="21" height="24.7" fill="#6b6b6b"/><circle cx="755.4" cy="223.6" r="2.8" fill="#e27070"/><circle cx="668" cy="236" r="2.2" fill="#12243a"/><circle cx="758.5" cy="239" r="2.2" fill="#12243a"/><circle cx="676.7" cy="335" r="2" fill="#12243a"/><circle cx="729.7" cy="335" r="2" fill="#12243a"/><g fill="#b8b8b8"><rect x="747" y="237.5" width="8" height="3"/><rect x="747" y="242" width="8" height="3"/><rect x="747" y="246.5" width="8" height="3"/></g><g fill="#b8b8b8"><rect x="712" y="329" width="3.5" height="9"/><rect x="716.7" y="329" width="3.5" height="9"/><rect x="721.4" y="329" width="3.5" height="9"/></g><rect x="665.4" y="260.2" width="5.2" height="38.2" fill="#d9d2c8"/><g fill="#9c958c"><rect x="665.4" y="262.2" width="5.2" height="1"/><rect x="665.4" y="266.9" width="5.2" height="1"/><rect x="665.4" y="271.6" width="5.2" height="1"/><rect x="665.4" y="276.4" width="5.2" height="1"/><rect x="665.4" y="281.1" width="5.2" height="1"/><rect x="665.4" y="285.8" width="5.2" height="1"/><rect x="665.4" y="290.5" width="5.2" height="1"/><rect x="665.4" y="295.2" width="5.2" height="1"/></g><rect x="665.4" y="304.5" width="5.2" height="28.5" fill="#d9d2c8"/><g fill="#9c958c"><rect x="665.4" y="306.5" width="5.2" height="1"/><rect x="665.4" y="311.2" width="5.2" height="1"/><rect x="665.4" y="315.9" width="5.2" height="1"/><rect x="665.4" y="320.7" width="5.2" height="1"/><rect x="665.4" y="325.4" width="5.2" height="1"/><rect x="665.4" y="330.1" width="5.2" height="1"/></g><rect x="757.5" y="241.0" width="5.2" height="51.5" fill="#d9d2c8"/><g fill="#9c958c"><rect x="757.5" y="243.0" width="5.2" height="1"/><rect x="757.5" y="247.7" width="5.2" height="1"/><rect x="757.5" y="252.4" width="5.2" height="1"/><rect x="757.5" y="257.2" width="5.2" height="1"/><rect x="757.5" y="261.9" width="5.2" height="1"/><rect x="757.5" y="266.6" width="5.2" height="1"/><rect x="757.5" y="271.3" width="5.2" height="1"/><rect x="757.5" y="276.0" width="5.2" height="1"/><rect x="757.5" y="280.8" width="5.2" height="1"/><rect x="757.5" y="285.5" width="5.2" height="1"/></g><rect x="757.5" y="295.0" width="5.2" height="38.0" fill="#d9d2c8"/><g fill="#9c958c"><rect x="757.5" y="297.0" width="5.2" height="1"/><rect x="757.5" y="301.7" width="5.2" height="1"/><rect x="757.5" y="306.4" width="5.2" height="1"/><rect x="757.5" y="311.2" width="5.2" height="1"/><rect x="757.5" y="315.9" width="5.2" height="1"/><rect x="757.5" y="320.6" width="5.2" height="1"/><rect x="757.5" y="325.3" width="5.2" height="1"/><rect x="757.5" y="330.0" width="5.2" height="1"/></g><rect x="685.4" y="262.8" width="17.4" height="70.2" fill="#1c1c1c"/><g fill="#e0e0e0"><rect x="686.5" y="265.0" width="1.2" height="1.6"/><rect x="700.5" y="265.0" width="1.2" height="1.6"/><rect x="686.5" y="269.7" width="1.2" height="1.6"/><rect x="700.5" y="269.7" width="1.2" height="1.6"/><rect x="686.5" y="274.4" width="1.2" height="1.6"/><rect x="700.5" y="274.4" width="1.2" height="1.6"/><rect x="686.5" y="279.2" width="1.2" height="1.6"/><rect x="700.5" y="279.2" width="1.2" height="1.6"/><rect x="686.5" y="283.9" width="1.2" height="1.6"/><rect x="700.5" y="283.9" width="1.2" height="1.6"/><rect x="686.5" y="288.6" width="1.2" height="1.6"/><rect x="700.5" y="288.6" width="1.2" height="1.6"/><rect x="686.5" y="293.3" width="1.2" height="1.6"/><rect x="700.5" y="293.3" width="1.2" height="1.6"/><rect x="686.5" y="298.0" width="1.2" height="1.6"/><rect x="700.5" y="298.0" width="1.2" height="1.6"/><rect x="686.5" y="302.8" width="1.2" height="1.6"/><rect x="700.5" y="302.8" width="1.2" height="1.6"/><rect x="686.5" y="307.5" width="1.2" height="1.6"/><rect x="700.5" y="307.5" width="1.2" height="1.6"/><rect x="686.5" y="312.2" width="1.2" height="1.6"/><rect x="700.5" y="312.2" width="1.2" height="1.6"/><rect x="686.5" y="316.9" width="1.2" height="1.6"/><rect x="700.5" y="316.9" width="1.2" height="1.6"/><rect x="686.5" y="321.6" width="1.2" height="1.6"/><rect x="700.5" y="321.6" width="1.2" height="1.6"/><rect x="686.5" y="326.4" width="1.2" height="1.6"/><rect x="700.5" y="326.4" width="1.2" height="1.6"/></g><circle cx="694" cy="272" r="1.1" fill="#0a0a0a"/><circle cx="694" cy="324" r="1.1" fill="#0a0a0a"/><g fill="none" stroke="#f0f0f0" stroke-width="1.6"><circle cx="735.8" cy="275.2" r="4.6"/><circle cx="735.8" cy="285.4" r="4.6"/></g><g fill="#f0f0f0"><rect x="734.8" y="273" width="2" height="4.5"/><rect x="733.5" y="284.4" width="4.6" height="2"/></g><g fill="#d8dde6" opacity="0.85"><rect x="672.5" y="268.5" width="9" height="2.2"/><rect x="672.5" y="273.1" width="9" height="2.2"/><rect x="672.5" y="277.7" width="7" height="2.2"/><rect x="672.5" y="282.3" width="4" height="2.2"/><rect x="672.5" y="286.9" width="6" height="2.2"/><rect x="672.5" y="291.5" width="6" height="2.2"/><rect x="672.5" y="296.1" width="5" height="2.2"/><rect x="672.5" y="306.0" width="5" height="2.2"/><rect x="672.5" y="310.6" width="5" height="2.2"/><rect x="672.5" y="315.2" width="5" height="2.2"/><rect x="672.5" y="319.8" width="5" height="2.2"/><rect x="672.5" y="324.4" width="5" height="2.2"/><rect x="672.5" y="329.0" width="5" height="2.2"/><rect x="680" y="289" width="2.2" height="9"/><rect x="680" y="318" width="2.2" height="10"/><rect x="748.0" y="254.0" width="6" height="2"/><rect x="748.0" y="258.6" width="6" height="2"/><rect x="751.0" y="263.2" width="3" height="2"/><rect x="751.0" y="267.8" width="3" height="2"/><rect x="751.0" y="272.4" width="3" height="2"/><rect x="751.0" y="277.0" width="3" height="2"/><rect x="751.0" y="281.6" width="3" height="2"/><rect x="751.0" y="288.2" width="3" height="2"/><rect x="751.0" y="292.8" width="3" height="2"/><rect x="751.0" y="297.4" width="3" height="2"/><rect x="751.0" y="302.0" width="3" height="2"/><rect x="751.0" y="306.6" width="3" height="2"/><rect x="745" y="287" width="2.2" height="20"/><rect x="741" y="265" width="2.4" height="4"/><rect x="735" y="256" width="2.2" height="3"/><rect x="741" y="257" width="2.2" height="2"/><rect x="722" y="266" width="2.2" height="16"/></g><text x="0" y="0" transform="translate(732.6,298.5) rotate(90) scale(1,1.25)" font-family="Liberation Sans" font-size="7.2" fill="none" stroke="#e8eef6" stroke-width="0.55">UNO</text><rect x="804.8" y="147" width="85.4" height="39.2" fill="#3f70a8" stroke="#5a86b8" stroke-width="0.8"/><g fill="#23436a"><circle cx="808.5" cy="150.5" r="1.3"/><circle cx="886.5" cy="150.5" r="1.3"/><circle cx="808.5" cy="182.5" r="1.3"/><circle cx="886.5" cy="182.5" r="1.3"/></g><circle cx="822.3" cy="165.5" r="15.9" fill="#dedede"/><circle cx="822.3" cy="165.5" r="14.3" fill="#1e1e1e"/><circle cx="822.3" cy="165.5" r="11.4" fill="url(#mesh)"/><circle cx="873.2" cy="165.5" r="15.9" fill="#dedede"/><circle cx="873.2" cy="165.5" r="14.3" fill="#1e1e1e"/><circle cx="873.2" cy="165.5" r="11.4" fill="url(#mesh)"/><rect x="838.7" y="148.5" width="17" height="6.4" rx="3.2" fill="#a39a90"/><text x="847.2" y="161.8" text-anchor="middle" font-family="Liberation Sans" font-size="3.6" font-weight="bold" fill="#dfe8f2">HC-SR04</text><g fill="#141414"><path d="M838.9,186.2 V183 A2,2 0 0 1 842.9,183 V186.2 Z M843.7,186.2 V183 A2,2 0 0 1 847.7,183 V186.2 Z M848.5,186.2 V183 A2,2 0 0 1 852.5,183 V186.2 Z M853.3,186.2 V183 A2,2 0 0 1 857.3,183 V186.2 Z"/></g><g fill="#a8bcd4"><rect x="840.5" y="174.5" width="0.9" height="4.5"/><rect x="845.2" y="173" width="0.9" height="6"/><rect x="850" y="174" width="0.9" height="5"/><rect x="854.8" y="174.5" width="0.9" height="4.5"/></g><g stroke="#d0d0d0" stroke-width="1.2"><path d="M840.9,182 V193 M845.7,182 V190 M850.5,182 V190 M855.3,182 V190"/></g><rect x="953.7" y="116.4" width="29.9" height="60" fill="#1c2a6a"/><rect x="963.3" y="107.7" width="8.7" height="4.8" fill="#d64848"/><path d="M965,112.5 V118 M970.3,112.5 V118" stroke="#c8c8c8" stroke-width="0.8"/><rect x="961.8" y="117.6" width="11.6" height="6" fill="none" stroke="#d8d8d8" stroke-width="0.9"/><g fill="#e8e8e8"><circle cx="965" cy="120.6" r="1.1"/><circle cx="970.3" cy="120.6" r="1.1"/></g><g fill="none" stroke="#c8c8c8" stroke-width="0.7"><circle cx="955.8" cy="120.6" r="1.2"/><circle cx="980.6" cy="120.6" r="1.2"/><path d="M957,120.6 H961.8 M973.4,120.6 H979.4"/></g><g fill="#d8d8d8"><rect x="956.5" y="127" width="3.5" height="7.5"/><rect x="963" y="127" width="3" height="7.5"/><rect x="970" y="127" width="3.5" height="7.5"/></g><g fill="#1c2a6a"><rect x="956.5" y="129.5" width="3.5" height="2.5"/><rect x="963" y="129.5" width="3" height="2.5"/></g><g fill="#8a8a9a"><rect x="970" y="129.5" width="3.5" height="2.5"/></g><g fill="#dcdcdc"><rect x="955.6" y="138.6" width="1.3" height="4.8"/><rect x="958.2" y="138.6" width="1.3" height="4.8"/><rect x="960.8" y="138.6" width="1.3" height="4.8"/><rect x="963.4" y="138.6" width="1.3" height="4.8"/><rect x="955.6" y="149.5" width="1.3" height="4.8"/><rect x="958.2" y="149.5" width="1.3" height="4.8"/><rect x="960.8" y="149.5" width="1.3" height="4.8"/><rect x="963.4" y="149.5" width="1.3" height="4.8"/><rect x="956" y="159.5" width="2.2" height="2.2"/><rect x="962.5" y="159.5" width="2.2" height="2.2"/><rect x="973" y="159.5" width="2.2" height="2.2"/><rect x="978.5" y="159.5" width="2.2" height="2.2"/><rect x="955.6" y="166.5" width="3.6" height="6"/><rect x="977.4" y="166.5" width="3.6" height="6"/></g><rect x="955.2" y="143.6" width="10" height="5.6" fill="#0e0e14"/><rect x="967.2" y="139.6" width="15.4" height="16.4" fill="#4a78c8"/><path d="M974.9,144.3 V151.3 M971.4,147.8 H978.4" stroke="#e8eef8" stroke-width="1.1"/><circle cx="968.2" cy="169" r="4.7" fill="#e6e6e6"/><rect x="958.5" y="176" width="19" height="1.2" fill="#9aa0b8"/><g stroke="#c8c8c8" stroke-width="1.1"><path d="M960.8,176 V194 M965.3,176 V194 M970.1,176 V194 M974.9,176 V194"/></g><path d="M669.0,283.5 L644.0,283.5 L644.0,193.7 L801.7,193.7 L801.7,217.6" fill="none" stroke="#3a1416" stroke-width="3.8" stroke-linejoin="round" stroke-linecap="round" opacity="0.8"/><path d="M669.0,283.5 L644.0,283.5 L644.0,193.7 L801.7,193.7 L801.7,217.6" fill="none" stroke="#b83c40" stroke-width="1.90" stroke-linejoin="round" stroke-linecap="round"/><path d="M841.4,192.7 L821.8,192.7 L821.8,220.0" fill="none" stroke="#3a1416" stroke-width="3.8" stroke-linejoin="round" stroke-linecap="round" opacity="0.8"/><path d="M841.4,192.7 L821.8,192.7 L821.8,220.0" fill="none" stroke="#b83c40" stroke-width="1.90" stroke-linejoin="round" stroke-linecap="round"/><path d="M974.9,192.0 L974.9,218.0 L936.0,218.0" fill="none" stroke="#3a1416" stroke-width="3.8" stroke-linejoin="round" stroke-linecap="round" opacity="0.8"/><path d="M974.9,192.0 L974.9,218.0 L936.0,218.0" fill="none" stroke="#b83c40" stroke-width="1.90" stroke-linejoin="round" stroke-linecap="round"/><path d="M761.4,261.0 L768.8,261.0 L768.8,222.8 L801.7,222.8" fill="none" stroke="#181818" stroke-width="3.8" stroke-linejoin="round" stroke-linecap="round" opacity="0.8"/><path d="M761.4,261.0 L768.8,261.0 L768.8,222.8 L801.7,222.8" fill="none" stroke="#bdbdbd" stroke-width="1.90" stroke-linejoin="round" stroke-linecap="round"/><path d="M856.0,189.0 L856.0,208.7 L826.6,208.7 L826.6,222.8 L821.4,222.8" fill="none" stroke="#181818" stroke-width="3.8" stroke-linejoin="round" stroke-linecap="round" opacity="0.8"/><path d="M856.0,189.0 L856.0,208.7 L826.6,208.7 L826.6,222.8 L821.4,222.8" fill="none" stroke="#bdbdbd" stroke-width="1.90" stroke-linejoin="round" stroke-linecap="round"/><path d="M970.1,190.0 L970.1,222.5 L936.0,222.5" fill="none" stroke="#181818" stroke-width="3.8" stroke-linejoin="round" stroke-linecap="round" opacity="0.8"/><path d="M970.1,190.0 L970.1,222.5 L936.0,222.5" fill="none" stroke="#bdbdbd" stroke-width="1.90" stroke-linejoin="round" stroke-linecap="round"/><path d="M960.8,192.0 L960.8,285.0 L936.4,285.0" fill="none" stroke="#2e2416" stroke-width="3.8" stroke-linejoin="round" stroke-linecap="round" opacity="0.8"/><path d="M960.8,192.0 L960.8,285.0 L936.4,285.0" fill="none" stroke="#b09478" stroke-width="1.90" stroke-linejoin="round" stroke-linecap="round"/><path d="M846.3,189.0 L846.3,237.3 L841.0,237.3" fill="none" stroke="#163a18" stroke-width="3.8" stroke-linejoin="round" stroke-linecap="round" opacity="0.8"/><path d="M846.3,189.0 L846.3,237.3 L841.0,237.3" fill="none" stroke="#8ccc8c" stroke-width="1.90" stroke-linejoin="round" stroke-linecap="round"/><path d="M851.0,189.0 L851.0,238.0" fill="none" stroke="#163a18" stroke-width="3.8" stroke-linejoin="round" stroke-linecap="round" opacity="0.8"/><path d="M851.0,189.0 L851.0,238.0" fill="none" stroke="#8ccc8c" stroke-width="1.90" stroke-linejoin="round" stroke-linecap="round"/><path d="M907.4,222.0 L907.4,88.7 L1014.0,88.7 L1014.0,322.8 L909.0,322.8 L909.0,280.0" fill="none" stroke="#163a18" stroke-width="3.8" stroke-linejoin="round" stroke-linecap="round" opacity="0.8"/><path d="M907.4,222.0 L907.4,88.7 L1014.0,88.7 L1014.0,322.8 L909.0,322.8 L909.0,280.0" fill="none" stroke="#8ccc8c" stroke-width="1.90" stroke-linejoin="round" stroke-linecap="round"/><path d="M922.0,223.0 L922.0,198.6 L956.6,198.6 L956.6,327.8 L797.8,327.8 L797.8,299.0" fill="none" stroke="#163a18" stroke-width="3.8" stroke-linejoin="round" stroke-linecap="round" opacity="0.8"/><path d="M922.0,223.0 L922.0,198.6 L956.6,198.6 L956.6,327.8 L797.8,327.8 L797.8,299.0" fill="none" stroke="#8ccc8c" stroke-width="1.90" stroke-linejoin="round" stroke-linecap="round"/><path d="M937.7,275.0 L937.7,265.0 L951.5,265.0 L951.5,361.6 L644.0,361.6 L644.0,308.0 L665.5,308.0" fill="none" stroke="#163a18" stroke-width="3.8" stroke-linejoin="round" stroke-linecap="round" opacity="0.8"/><path d="M937.7,275.0 L937.7,265.0 L951.5,265.0 L951.5,361.6 L644.0,361.6 L644.0,308.0 L665.5,308.0" fill="none" stroke="#8ccc8c" stroke-width="1.90" stroke-linejoin="round" stroke-linecap="round"/><path d="M878.4,222.0 L878.4,318.6 L826.7,318.6 L826.7,284.5" fill="none" stroke="#163a18" stroke-width="3.8" stroke-linejoin="round" stroke-linecap="round" opacity="0.8"/><path d="M878.4,222.0 L878.4,318.6 L826.7,318.6 L826.7,284.5" fill="none" stroke="#8ccc8c" stroke-width="1.90" stroke-linejoin="round" stroke-linecap="round"/><path d="M761.4,280.0 L779.0,280.0 L779.0,251.6 L850.7,251.6" fill="none" stroke="#163a18" stroke-width="3.8" stroke-linejoin="round" stroke-linecap="round" opacity="0.8"/><path d="M761.4,280.0 L779.0,280.0 L779.0,251.6 L850.7,251.6" fill="none" stroke="#8ccc8c" stroke-width="1.90" stroke-linejoin="round" stroke-linecap="round"/><path d="M761.4,285.2 L774.0,285.2 L774.0,261.2 L841.4,261.2 L841.4,256.0" fill="none" stroke="#163a18" stroke-width="3.8" stroke-linejoin="round" stroke-linecap="round" opacity="0.8"/><path d="M761.4,285.2 L774.0,285.2 L774.0,261.2 L841.4,261.2 L841.4,256.0" fill="none" stroke="#8ccc8c" stroke-width="1.90" stroke-linejoin="round" stroke-linecap="round"/><path d="M762.0,302.4 L783.5,302.4 L783.5,333.2 L821.8,333.2 L821.8,289.6 L802.3,289.6" fill="none" stroke="#163a18" stroke-width="3.8" stroke-linejoin="round" stroke-linecap="round" opacity="0.8"/><path d="M762.0,302.4 L783.5,302.4 L783.5,333.2 L821.8,333.2 L821.8,289.6 L802.3,289.6" fill="none" stroke="#8ccc8c" stroke-width="1.90" stroke-linejoin="round" stroke-linecap="round"/><path d="M762.0,307.3 L774.0,307.3 L774.0,342.5 L860.4,342.5 L860.4,290.0" fill="none" stroke="#163a18" stroke-width="3.8" stroke-linejoin="round" stroke-linecap="round" opacity="0.8"/><path d="M762.0,307.3 L774.0,307.3 L774.0,342.5 L860.4,342.5 L860.4,290.0" fill="none" stroke="#8ccc8c" stroke-width="1.90" stroke-linejoin="round" stroke-linecap="round"/><path d="M796.0,266.5 V258.2 A4.2,4.2 0 0 1 804.4,258.2 V266.5 Z" fill="#d4de3a"/><rect x="796.0" y="265.5" width="8.4" height="1.2" fill="#a8b020"/><g stroke="#a8a890" stroke-width="1"><path d="M798.5,266.5 L797.5,271.0 M802.0,266.5 L803.5,271.0"/></g><path d="M853.5,265.8 V257.5 A4.2,4.2 0 0 1 861.9,257.5 V265.8 Z" fill="#e23a3a"/><rect x="853.5" y="264.8" width="8.4" height="1.2" fill="#b02020"/><g stroke="#a8a890" stroke-width="1"><path d="M856.0,265.8 L855.0,270.3 M859.5,265.8 L861.0,270.3"/></g><path d="M825.0,280.0 H856.5" stroke="#c8c8c8" stroke-width="1"/><rect x="830.8" y="277.5" width="20.0" height="5" rx="2.2" fill="#e2c18a"/><g fill="#d23030"><rect x="834.2" y="277.5" width="1.6" height="5"/><rect x="837.2" y="277.5" width="1.6" height="5"/></g><path d="M907.6,275.0 H937.7" stroke="#c8c8c8" stroke-width="1"/><rect x="912.7" y="272.5" width="20.0" height="5" rx="2.2" fill="#e8a85a"/><g fill="#2a1a10"><rect x="916.2" y="272.5" width="1.4" height="5"/><rect x="924.7" y="272.5" width="1.4" height="5"/></g><path d="M797.5,271 V300" stroke="#c8c8c8" stroke-width="1"/><rect x="795" y="280" width="5" height="20" rx="2.2" fill="#e2c18a"/><g fill="#d23030"><rect x="795" y="284" width="5" height="1.6"/><rect x="795" y="287" width="5" height="1.6"/><rect x="795" y="290" width="5" height="1.6"/></g></svg>
<div class="fab" style="left:532px;background:#2f8b3b"></div>
<svg class="abs" style="left:541px;top:79px" width="14" height="14" viewBox="0 0 14 14"><path d="M3.5,2 L11.5,7 L3.5,12 Z" fill="#e6e6e6"/></svg>
<div class="fab" style="left:569.5px;background:#1760b8"></div>
<svg class="abs" style="left:577.5px;top:78px" width="16" height="16" viewBox="0 0 16 16"><path d="M8,2.5 V13.5 M2.5,8 H13.5" stroke="#eef2f8" stroke-width="1.6"/></svg>
<div class="fab" style="left:607px;background:#5e5f60"></div>
<svg class="abs" style="left:619px;top:78px" width="8" height="16" viewBox="0 0 8 16"><circle cx="4" cy="3" r="1.3" fill="#e6e6e6"/><circle cx="4" cy="8" r="1.3" fill="#e6e6e6"/><circle cx="4" cy="13" r="1.3" fill="#e6e6e6"/></svg>
</body></html>
